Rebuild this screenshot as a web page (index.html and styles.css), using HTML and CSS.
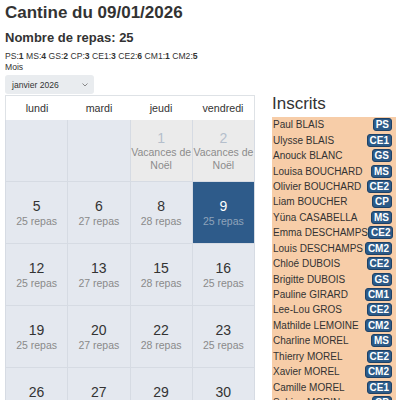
FILE: index.html
```html
<!DOCTYPE html>
<html lang="fr">
<head>
<meta charset="utf-8">
<title>Cantine du 09/01/2026</title>
<link rel="stylesheet" href="styles.css">
</head>
<body>
<h1 class="title">Cantine du 09/01/2026</h1>
<h2 class="count">Nombre de repas: 25</h2>
<div class="stats">PS:<b>1</b> MS:<b>4</b> GS:<b>2</b> CP:<b>3</b> CE1:<b>3</b> CE2:<b>6</b> CM1:<b>1</b> CM2:<b>5</b></div>
<div class="label">Mois</div>
<div class="main">
  <div class="left">
    <div class="select"><span>janvier 2026</span><svg class="chev" width="6" height="4" viewBox="0 0 6 4"><path d="M0.5 0.5 L3 3 L5.5 0.5" fill="none" stroke="#888" stroke-width="1"/></svg></div>
    <div class="cal-head">
      <div>lundi</div><div>mardi</div><div>jeudi</div><div>vendredi</div>
    </div>
    <div class="cal">
      <div class="cell"></div>
      <div class="cell"></div>
      <div class="cell hol"><span class="num">1</span><span class="txt">Vacances de Noël</span></div>
      <div class="cell hol"><span class="num">2</span><span class="txt">Vacances de Noël</span></div>
      <div class="cell"><span class="num">5</span><span class="txt">25 repas</span></div>
      <div class="cell"><span class="num">6</span><span class="txt">27 repas</span></div>
      <div class="cell"><span class="num">8</span><span class="txt">28 repas</span></div>
      <div class="cell sel"><span class="num">9</span><span class="txt">25 repas</span></div>
      <div class="cell"><span class="num">12</span><span class="txt">25 repas</span></div>
      <div class="cell"><span class="num">13</span><span class="txt">27 repas</span></div>
      <div class="cell"><span class="num">15</span><span class="txt">28 repas</span></div>
      <div class="cell"><span class="num">16</span><span class="txt">25 repas</span></div>
      <div class="cell"><span class="num">19</span><span class="txt">25 repas</span></div>
      <div class="cell"><span class="num">20</span><span class="txt">27 repas</span></div>
      <div class="cell"><span class="num">22</span><span class="txt">28 repas</span></div>
      <div class="cell"><span class="num">23</span><span class="txt">25 repas</span></div>
      <div class="cell"><span class="num">26</span><span class="txt">25 repas</span></div>
      <div class="cell"><span class="num">27</span><span class="txt">27 repas</span></div>
      <div class="cell"><span class="num">29</span><span class="txt">28 repas</span></div>
      <div class="cell"><span class="num">30</span><span class="txt">25 repas</span></div>
    </div>
  </div>
  <div class="right">
    <h3 class="inscrits">Inscrits</h3>
    <ul class="list">
      <li><span>Paul BLAIS</span><span class="badge">PS</span></li>
      <li><span>Ulysse BLAIS</span><span class="badge">CE1</span></li>
      <li><span>Anouck BLANC</span><span class="badge">GS</span></li>
      <li><span>Louisa BOUCHARD</span><span class="badge">MS</span></li>
      <li><span>Olivier BOUCHARD</span><span class="badge">CE2</span></li>
      <li><span>Liam BOUCHER</span><span class="badge">CP</span></li>
      <li><span>Yüna CASABELLA</span><span class="badge">MS</span></li>
      <li><span>Emma DESCHAMPS</span><span class="badge">CE2</span></li>
      <li><span>Louis DESCHAMPS</span><span class="badge">CM2</span></li>
      <li><span>Chloé DUBOIS</span><span class="badge">CE2</span></li>
      <li><span>Brigitte DUBOIS</span><span class="badge">GS</span></li>
      <li><span>Pauline GIRARD</span><span class="badge">CM1</span></li>
      <li><span>Lee-Lou GROS</span><span class="badge">CE2</span></li>
      <li><span>Mathilde LEMOINE</span><span class="badge">CM2</span></li>
      <li><span>Charline MOREL</span><span class="badge">MS</span></li>
      <li><span>Thierry MOREL</span><span class="badge">CE2</span></li>
      <li><span>Xavier MOREL</span><span class="badge">CM2</span></li>
      <li><span>Camille MOREL</span><span class="badge">CE1</span></li>
      <li><span>Sabine MORIN</span><span class="badge">CP</span></li>
      <li><span>Hugo PETIT</span><span class="badge">CE1</span></li>
      <li><span>Léa PETIT</span><span class="badge">CM2</span></li>
      <li><span>Nathan RENAUD</span><span class="badge">CP</span></li>
      <li><span>Jade ROUSSEAU</span><span class="badge">MS</span></li>
      <li><span>Tom SIMON</span><span class="badge">CE2</span></li>
      <li><span>Zoé VINCENT</span><span class="badge">CM2</span></li>
    </ul>
  </div>
</div>
</body>
</html>
```
FILE: styles.css
```css
html { overflow: hidden; }
body {
  margin: 0;
  padding: 0 5px;
  font-family: "Liberation Sans", Arial, sans-serif;
  color: #333;
}
.title {
  margin: 3px 0 7px;
  font-size: 17px;
  line-height: 20px;
  font-weight: bold;
}
.count {
  margin: 0 0 5px;
  font-size: 13px;
  line-height: 16px;
  font-weight: bold;
}
.stats, .label {
  font-size: 8.6px;
  line-height: 11px;
}
.stats b { font-weight: bold; }
.main {
  display: grid;
  grid-template-columns: 250px 124px;
  column-gap: 17px;
  margin-top: 2px;
}
.select {
  width: 89px;
  height: 19px;
  box-sizing: border-box;
  background: #e9ecef;
  border-radius: 3px;
  display: flex;
  align-items: center;
  justify-content: space-between;
  padding: 0 6px 0 7px;
  font-size: 8.6px;
  margin-bottom: 1px;
}
.chev { display: block; }
.cal-head {
  display: grid;
  grid-template-columns: repeat(4, 1fr);
  border: 1px solid #dee2e6;
  border-bottom: none;
  height: 25px;
  box-sizing: border-box;
  background: #fff;
}
.cal-head div {
  display: flex;
  align-items: center;
  justify-content: center;
  font-size: 10.7px;
}
.cal {
  display: grid;
  grid-template-columns: repeat(4, 1fr);
  grid-auto-rows: 61px;
  gap: 1px;
  padding: 0 1px 1px;
  background: #d6dbe3;
}
.cell {
  background: #e4e8ef;
  display: flex;
  flex-direction: column;
  align-items: center;
  justify-content: center;
  text-align: center;
}
.num {
  font-size: 14px;
  line-height: 16.8px;
  color: #333;
}
.txt {
  font-size: 10.5px;
  line-height: 12.6px;
  color: #8a8a8a;
}
.hol { background: #ebebeb; }
.hol .num { color: #b5bfcc; }
.hol .txt { color: #8c8c8c; }
.sel { background: #2e5b8a; }
.sel .num { color: #fff; }
.sel .txt { color: #8fa3ba; }
.right {
  padding-top: 19px;
}
.inscrits {
  margin: 0 0 3px;
  font-size: 17px;
  line-height: 20px;
  font-weight: normal;
}
.list {
  list-style: none;
  margin: 0;
  padding: 0 4px 0 1px;
  background: #f7cda8;
}
.list li {
  display: flex;
  justify-content: space-between;
  align-items: center;
  height: 15.45px;
  font-size: 10px;
  color: #333;
  white-space: nowrap;
}
.badge {
  box-sizing: border-box;
  height: 13px;
  line-height: 11px;
  padding: 0 2px;
  border: 1px solid #1e4166;
  border-radius: 3px;
  background: #2c5a87;
  color: #fff;
  font-weight: bold;
  font-size: 10px;
}
```
